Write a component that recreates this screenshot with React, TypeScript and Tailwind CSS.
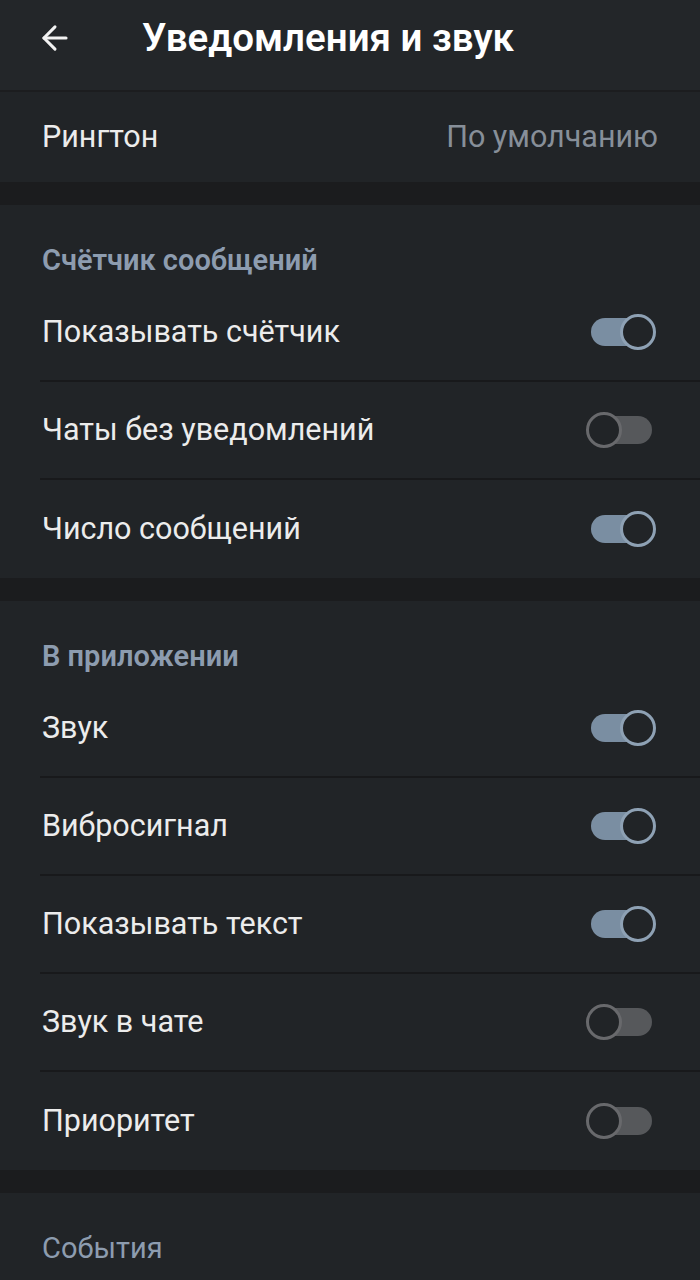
import { ArrowLeft } from "lucide-react";

type Row = { label: string; on: boolean };

const counterRows: Row[] = [
  { label: "Показывать счётчик", on: true },
  { label: "Чаты без уведомлений", on: false },
  { label: "Число сообщений", on: true },
];

const appRows: Row[] = [
  { label: "Звук", on: true },
  { label: "Вибросигнал", on: true },
  { label: "Показывать текст", on: true },
  { label: "Звук в чате", on: false },
  { label: "Приоритет", on: false },
];

function Toggle({ on }: { on: boolean }) {
  return (
    <div className="relative w-[70px] h-[36px] flex items-center">
      <div
        className={
          "absolute left-[5px] right-[4px] h-[28px] rounded-full " +
          (on ? "bg-[#7a8ea2]" : "bg-[#56585b]")
        }
      />
      <div
        className={
          "absolute w-[36px] h-[36px] rounded-full border-[3px] bg-[#212427] " +
          (on ? "right-0 border-[#8ea1b4]" : "left-0 border-[#68696c]")
        }
      />
    </div>
  );
}

function SectionHeader({ title, bold = true }: { title: string; bold?: boolean }) {
  return (
    <div className="h-[79px] flex items-end pb-[8px] px-[42px]">
      <span
        className={
          "text-[29px] leading-[32px] text-[#8d9caf] " +
          (bold ? "font-semibold" : "font-normal")
        }
      >
        {title}
      </span>
    </div>
  );
}

function ToggleSection({ title, rows }: { title: string; rows: Row[] }) {
  return (
    <section className="bg-[#212427]">
      <SectionHeader title={title} />
      {rows.map((r, i) => (
        <div key={r.label} className="pl-[40px]">
          <div
            className={
              "h-[98px] flex items-center justify-between pr-[44px] " +
              (i < rows.length - 1 ? "border-b-[2px] border-[#18191b]" : "")
            }
          >
            <span className="pl-[2px] text-[30.5px] text-[#ececec]">{r.label}</span>
            <Toggle on={r.on} />
          </div>
        </div>
      ))}
    </section>
  );
}

export default function App() {
  return (
    <div
      className="w-[700px] h-[1280px] overflow-hidden bg-[#1b1c1e]"
      style={{ fontFamily: "Roboto, 'Noto Sans', sans-serif" }}
    >
      {/* Header */}
      <header className="h-[92px] bg-[#232629] flex items-center border-b-[2px] border-[#1c1d1f] pb-[14px]">
        <div className="w-[142px] pl-[36px]">
          <ArrowLeft size={38} strokeWidth={1.9} className="text-[#f2f2f2]" />
        </div>
        <h1 className="text-[38.5px] font-semibold text-white">Уведомления и звук</h1>
      </header>

      {/* Ringtone */}
      <div className="h-[90px] bg-[#212427] flex items-center justify-between px-[42px]">
        <span className="text-[30.5px] text-[#ececec]">Рингтон</span>
        <span className="text-[30.5px] text-[#878f99]">По умолчанию</span>
      </div>

      <div className="h-[23px]" />
      <ToggleSection title="Счётчик сообщений" rows={counterRows} />
      <div className="h-[23px]" />
      <ToggleSection title="В приложении" rows={appRows} />
      <div className="h-[23px]" />

      <section className="bg-[#212427] h-[200px]">
        <SectionHeader title="События" bold={false} />
      </section>
    </div>
  );
}
